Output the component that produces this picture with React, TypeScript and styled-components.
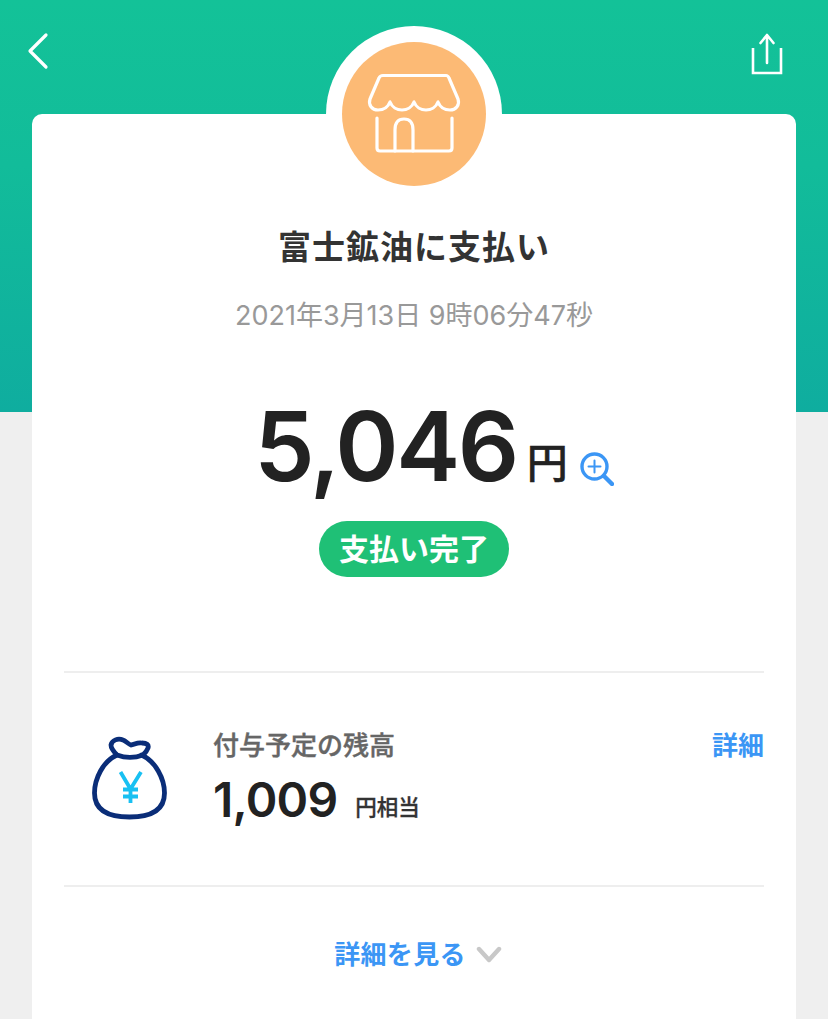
import styled, { createGlobalStyle } from "styled-components";

const GlobalStyle = createGlobalStyle`
  html, body {
    margin: 0;
    padding: 0;
    height: 100%;
    overflow: hidden;
    background: #efefef;
  }
  body {
    font-family: Inter, "Noto Sans CJK JP", sans-serif;
  }
`;

const Page = styled.div`
  width: 828px;
  height: 1019px;
  overflow: hidden;
  background: linear-gradient(180deg, #13c298 0%, #12bc9a 40%, #0fad9f 100%) top / 100% 412px no-repeat;
`;

const TopBar = styled.div`
  height: 114px;
  padding: 30px 44px 0 24px;
  box-sizing: border-box;
  display: flex;
  justify-content: space-between;
  align-items: flex-start;
`;

const Card = styled.div`
  position: relative;
  margin: 0 32px;
  height: 940px;
  padding: 0 32px;
  background: #fff;
  border-radius: 10px;
  display: flex;
  flex-direction: column;
  align-items: center;
`;

const AvatarRing = styled.div`
  position: absolute;
  top: -88px;
  left: 294px;
  width: 176px;
  height: 176px;
  border-radius: 50%;
  background: #fff;
  clip-path: inset(0 0 88px 0);
`;

const Avatar = styled.div`
  position: absolute;
  top: -72px;
  left: 310px;
  width: 144px;
  height: 144px;
  border-radius: 50%;
  background: #fcba75;
  display: flex;
  align-items: center;
  justify-content: center;
`;

const Title = styled.h1`
  margin: 112px 0 0;
  font-size: 33px;
  line-height: 42px;
  font-weight: 700;
  color: #333;
  letter-spacing: 1px;
`;

const DateLine = styled.div`
  margin-top: 30px;
  font-size: 27px;
  line-height: 36px;
  color: #999;
`;

const AmountRow = styled.div`
  margin-top: 60px;
  display: flex;
  align-items: flex-end;
  height: 104px;
  padding-left: 40px;
`;

const Amount = styled.span`
  font-size: 96px;
  line-height: 104px;
  font-weight: 600;
  color: #222;
  letter-spacing: -2.4px;
`;

const Unit = styled.span`
  margin-left: 10px;
  margin-bottom: 11px;
  font-size: 41px;
  line-height: 48px;
  font-weight: 500;
  color: #222;
  -webkit-text-stroke: 0.5px #222;
`;

const ZoomIcon = styled.svg`
  margin-left: 12px;
  margin-bottom: 12px;
`;

const StatusPill = styled.div`
  margin-top: 23px;
  height: 56px;
  padding: 0 20px;
  border-radius: 28px;
  background: #1fc076;
  color: #fff;
  font-size: 30px;
  line-height: 56px;
  font-weight: 700;
`;

const Divider = styled.div`
  align-self: stretch;
  height: 2px;
  background: #eeeeee;
`;

const TopDivider = styled(Divider)`
  margin-top: 94px;
`;

const PointRow = styled.div`
  align-self: stretch;
  height: 212px;
  display: flex;
  align-items: flex-start;
`;

const BagIcon = styled.svg`
  margin: 63px 0 0 27px;
  flex: none;
`;

const PointBody = styled.div`
  margin-left: 44px;
  padding-top: 55px;
  flex: 1;
`;

const PointLabel = styled.div`
  font-size: 26px;
  line-height: 36px;
  font-weight: 500;
  color: #666;
  -webkit-text-stroke: 0.4px #666;
`;

const PointValue = styled.div`
  margin-top: 6px;
  display: flex;
  align-items: flex-end;
`;

const PointAmount = styled.span`
  font-size: 48px;
  line-height: 60px;
  font-weight: 600;
  color: #222;
  letter-spacing: -0.8px;
`;

const PointUnit = styled.span`
  margin-left: 18px;
  margin-bottom: 8px;
  font-size: 21.500px;
  line-height: 30px;
  font-weight: 500;
  color: #333;
  -webkit-text-stroke: 0.3px #333;
`;

const BlueLink = styled.a`
  color: #3b96f5;
  font-weight: 700;
  text-decoration: none;
`;

const DetailLink = styled(BlueLink)`
  margin-top: 55px;
  font-size: 26px;
  line-height: 36px;
`;

const MoreRow = styled.div`
  margin-top: 50px;
  padding-left: 8px;
  display: flex;
  align-items: center;
  gap: 10px;
`;

const MoreLink = styled(BlueLink)`
  font-size: 26px;
  line-height: 36px;
  letter-spacing: 0.3px;
`;

export default function App() {
  return (
    <>
      <GlobalStyle />
      <Page>
        <TopBar>
          <svg width="30" height="42" viewBox="0 0 30 42" fill="none" stroke="#fff" strokeWidth="3.200" strokeLinecap="round" strokeLinejoin="round">
            <path d="M22 5 6 21 22 37" />
          </svg>
          <svg width="34" height="46" viewBox="0 0 34 46" fill="none" stroke="#fff" strokeWidth="2.600" strokeLinecap="round" strokeLinejoin="round">
            <path d="M3 18v25h28V18" strokeLinecap="butt" strokeLinejoin="miter" />
            <path d="M17 33V5M10.500 13 17 5l6.500 8" />
          </svg>
        </TopBar>
        <Card>
          <AvatarRing />
          <Avatar>
            <svg width="96" height="84" viewBox="0 0 96 84" fill="none" stroke="#fff" strokeWidth="3.200" strokeLinecap="round" strokeLinejoin="round">
              <path d="M17 3.500H80Q82 3.500 83 6L92 27C94 33 90 38 84 38C78 38 74 35 72 30C70 35 65 38 60 38C55 38 50 35 48 30C46 35 41 38 36 38C31 38 26 35 24 30C22 35 18 38 12 38C6 38 2 33 4 27L13 6Q14 3.500 17 3.500Z" />
              <path d="M11 46V76Q11 79 14 79H83Q86 79 86 76V46" />
              <path d="M29 79V58C29 50 33 47 38 47C43 47 47 50 47 58V79" />
            </svg>
          </Avatar>
          <Title>富士鉱油に支払い</Title>
          <DateLine>2021年3月13日 9時06分47秒</DateLine>
          <AmountRow>
            <Amount>5,046</Amount>
            <Unit>円</Unit>
            <ZoomIcon width="34" height="34" viewBox="0 0 34 34" fill="none" stroke="#3b96f5" strokeLinecap="round">
              <circle cx="14.500" cy="14.500" r="12.500" strokeWidth="3.400" />
              <path d="M24 24l8 8" strokeWidth="4.400" />
              <path d="M14.500 8.500v12M8.500 14.500h12" strokeWidth="2" />
            </ZoomIcon>
          </AmountRow>
          <StatusPill>支払い完了</StatusPill>
          <TopDivider />
          <PointRow>
            <BagIcon width="78" height="86" viewBox="0 0 78 86" fill="none" strokeLinecap="round" strokeLinejoin="round">
              <path d="M26 19C12 25 3.500 43 3.500 57c0 18 15 24 35 24s35-6 35-24c0-14-9-32-23-38" stroke="#0a2d78" strokeWidth="4.800" />
              <path d="M26 19c-3-3-6-6-6-10 1-5 7-7 12-5 3 1 5 4 8 5 3 0 6-3 11-2 5 0 7 2 6 5-1 3-3 5-5 7-8 3-18 3-26 0Z" stroke="#0a2d78" strokeWidth="4.800" />
              <path d="M29.500 36 39.500 53 50 36M39.500 53V67M32 53.500H47M32 60.500H47" stroke="#18c0f2" strokeWidth="3.800" strokeLinecap="butt" strokeLinejoin="miter" />
            </BagIcon>
            <PointBody>
              <PointLabel>付与予定の残高</PointLabel>
              <PointValue>
                <PointAmount>1,009</PointAmount>
                <PointUnit>円相当</PointUnit>
              </PointValue>
            </PointBody>
            <DetailLink href="#">詳細</DetailLink>
          </PointRow>
          <Divider />
          <MoreRow>
            <MoreLink href="#">詳細を見る</MoreLink>
            <svg width="26" height="18" viewBox="0 0 26 18" fill="none" stroke="#c8c8c8" strokeWidth="4.400" strokeLinecap="round" strokeLinejoin="round">
              <path d="M3 3l10 11L23 3" />
            </svg>
          </MoreRow>
        </Card>
      </Page>
    </>
  );
}
